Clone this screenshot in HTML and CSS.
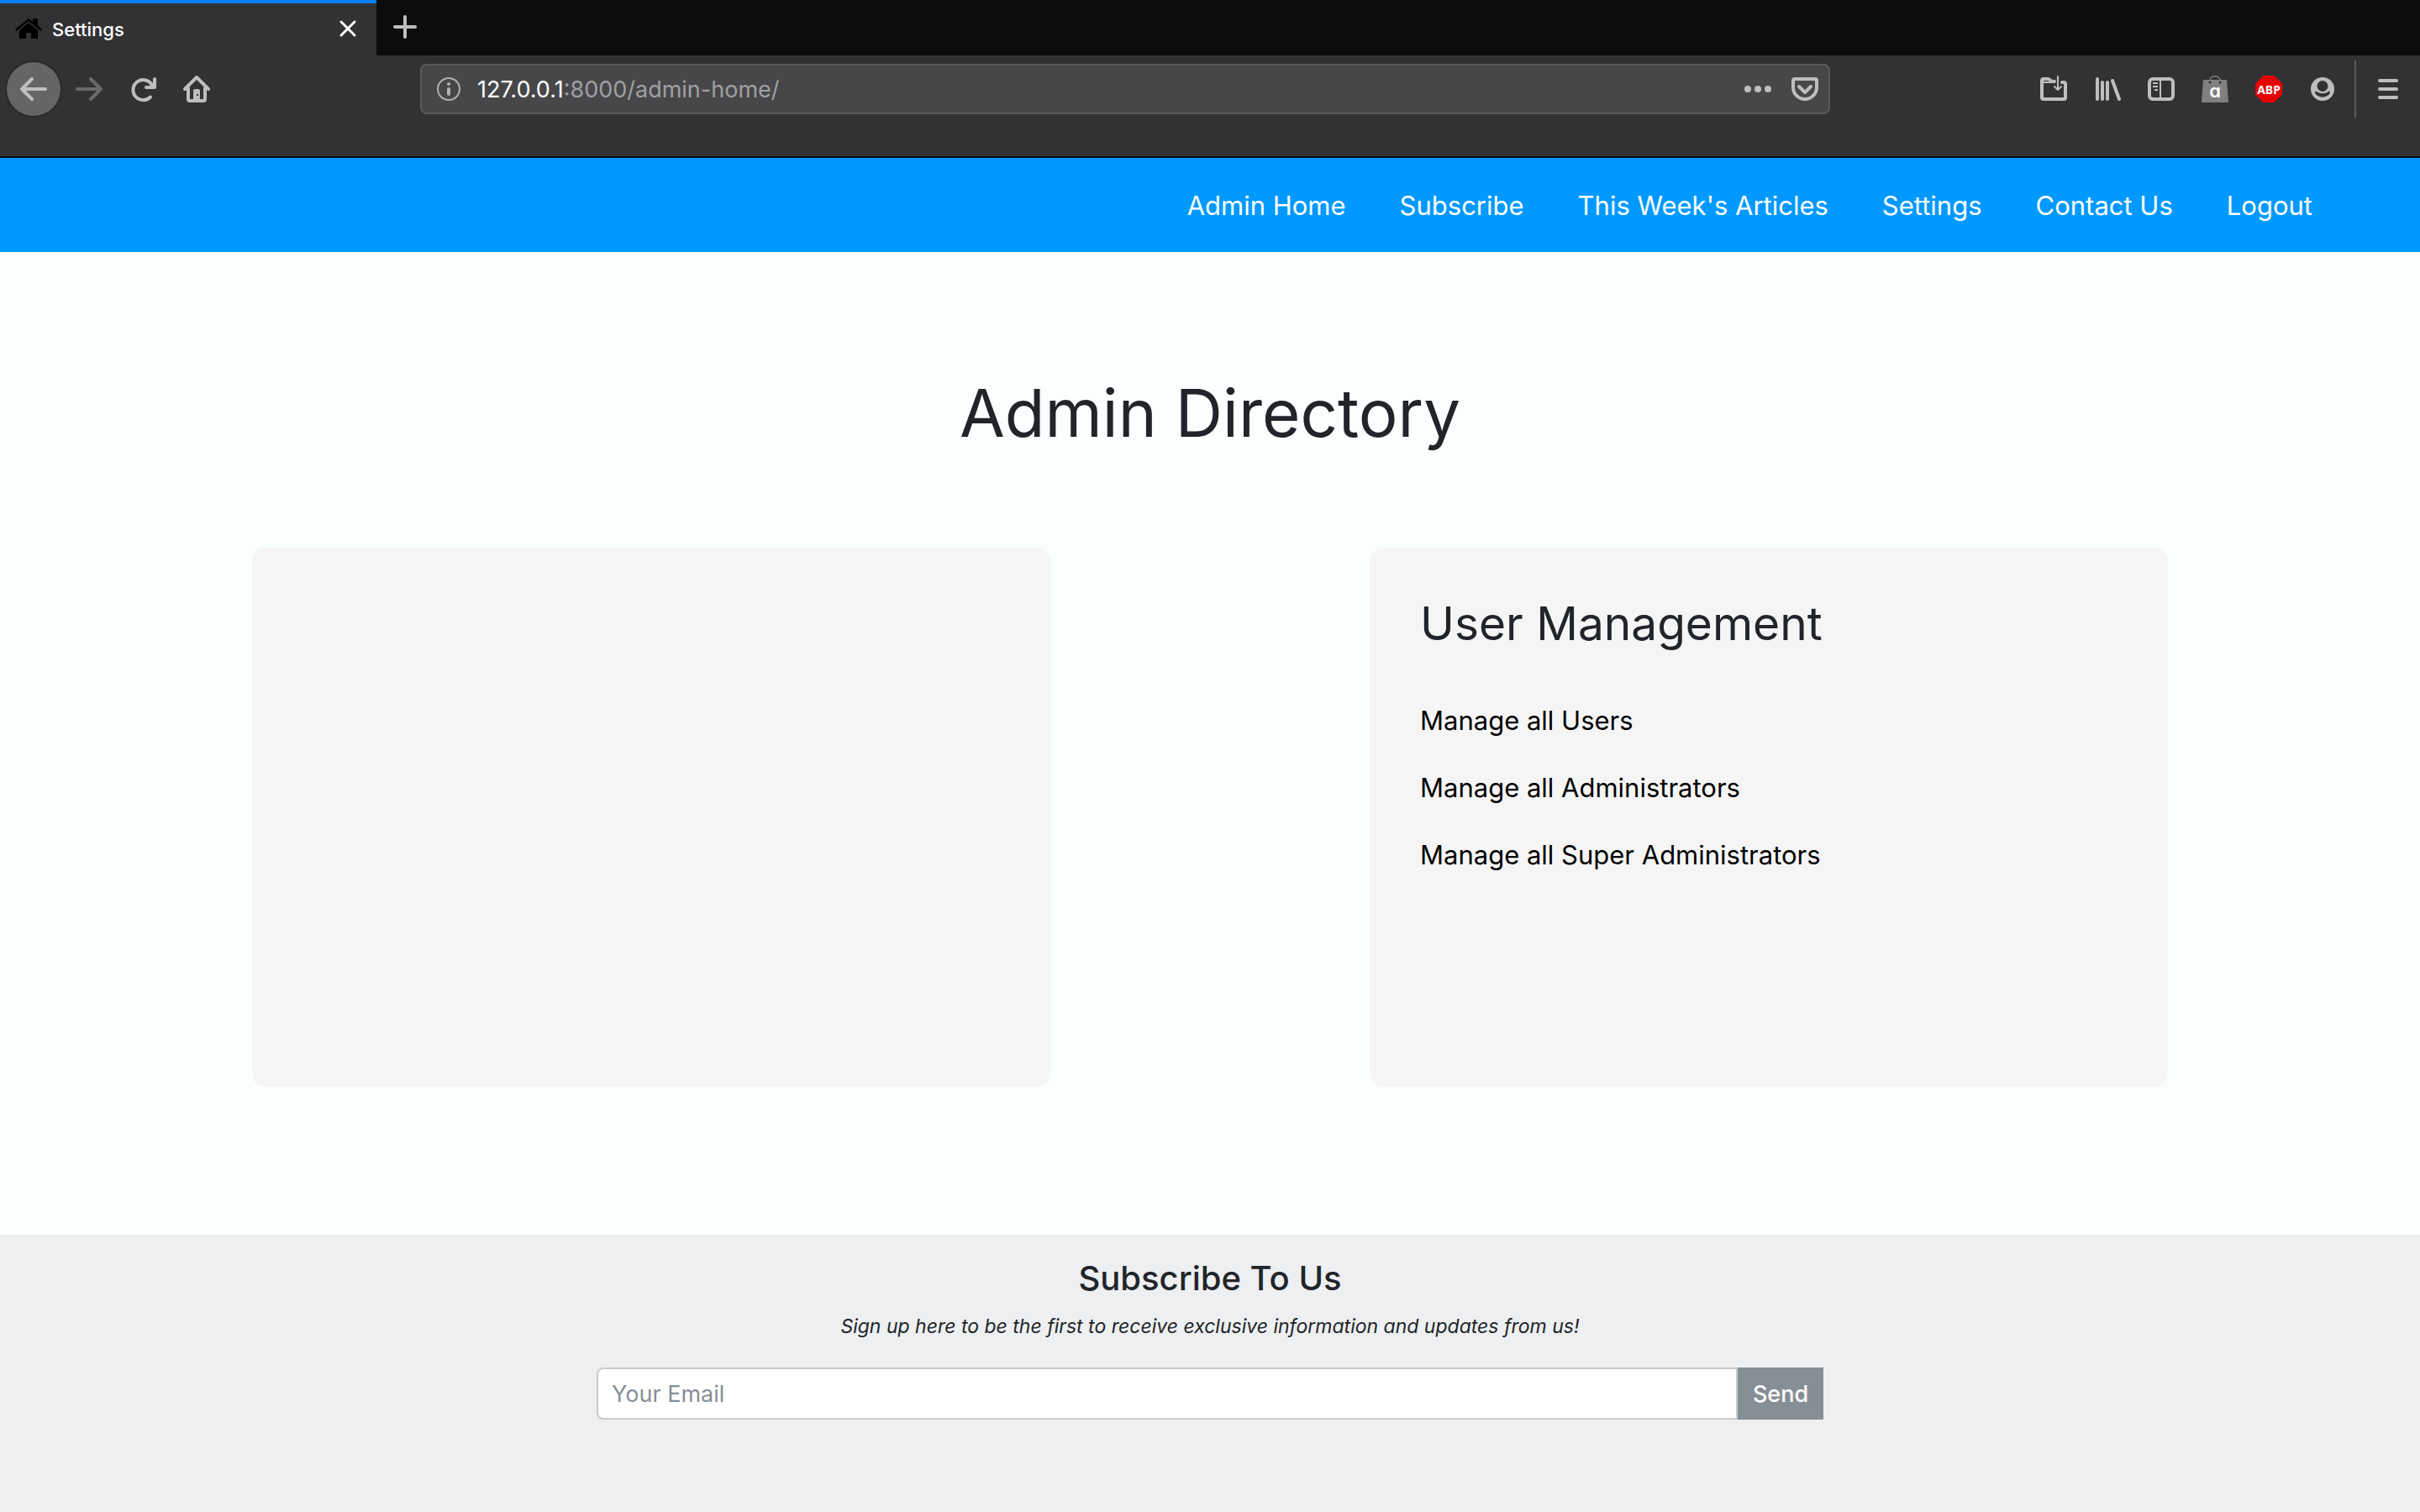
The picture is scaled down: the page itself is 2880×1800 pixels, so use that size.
FILE: index.html
```
<!DOCTYPE html>
<html lang="en">
<head>
<meta charset="utf-8">
<meta name="viewport" content="width=device-width, initial-scale=1">
<title>Settings</title>
<link rel="stylesheet" href="styles.css">
</head>
<body>
<div class="browser">
  <div class="tabs">
    <div class="tab">
      <svg class="icon" viewBox="0 0 32 32" aria-hidden="true"><path fill="#000" d="M0 16 16 3l5 4V3h6v8l5 5-1.500 2L16 6 1.500 18z"/><path fill="#000" d="M5 17 16 8l11 9v10h-8v-7h-6v7H5z"/></svg>
      <span class="tab-title">Settings</span>
      <button class="tab-close" type="button" aria-label="Close tab"><svg class="icon" viewBox="0 0 32 32"><path fill="none" stroke="#fff" stroke-width="3" stroke-linecap="round" d="M8 7l16 16M24 7L8 23"/></svg></button>
    </div>
    <button class="tab-new" type="button" aria-label="New tab"><svg class="icon" viewBox="0 0 32 32"><path class="line" d="M16 3v24M4 15h24"/></svg></button>
  </div>
  <div class="toolbar">
    <div class="tools">
      <button class="tool back" type="button" aria-label="Back"><svg class="icon" viewBox="0 0 32 32"><path class="line" d="M30 16H3M14 4L2 16l12 12"/></svg></button>
      <button class="tool forward" type="button" aria-label="Forward"><svg class="icon" viewBox="0 0 32 32"><path class="line" d="M2 16h27M18 4l12 12-12 12"/></svg></button>
      <button class="tool" type="button" aria-label="Reload"><svg class="icon" viewBox="0 0 32 32"><path class="line" d="M25 25.500A12 12 0 1 1 27 11.500"/><path class="line" d="M30 4v10H20"/></svg></button>
      <button class="tool" type="button" aria-label="Home"><svg class="icon" viewBox="0 0 32 32"><path class="line" d="M2 16L16 2l14 14M6 15v13q0 2 2 2h16q2 0 2-2V15"/><path class="fill" fill-rule="evenodd" d="M12 18q0-2 2-2h4q2 0 2 2v12h-8zM16 22v2h2v-2z"/></svg></button>
    </div>
    <div class="urlbar">
      <svg class="icon" viewBox="0 0 32 32" aria-hidden="true"><circle cx="16" cy="16" r="13" fill="none" stroke="#b1b1b3" stroke-width="2"/><circle cx="16" cy="10" r="2" fill="#b1b1b3"/><path stroke="#b1b1b3" stroke-width="4" stroke-linecap="round" d="M16 16v6"/></svg>
      <span class="url"><span class="host">127.0.0.1</span>:8000/admin-home/</span>
      <button class="url-action" type="button" aria-label="Page actions"><svg class="icon" viewBox="0 0 32 32"><g class="fill"><circle cx="4" cy="16" r="4"/><circle cx="16" cy="16" r="4"/><circle cx="28" cy="16" r="4"/></g></svg></button>
      <button class="url-action" type="button" aria-label="Save to Pocket"><svg class="icon" viewBox="0 0 32 32"><path class="line" d="M4 4h24q2 0 2 2v8a14 14 0 0 1-28 0V6q0-2 2-2zM9 13l7 7 7-7"/></svg></button>
    </div>
    <div class="tools">
      <button class="tool" type="button" aria-label="Open folder"><svg class="icon" viewBox="0 0 32 32"><path class="line" d="M26 8h2q2 0 2 2v16q0 2-2 2H4q-2 0-2-2V6q0-2 2-2h6l4 3h3"/><path fill="none" stroke="#bebebf" stroke-width="2" stroke-linecap="round" stroke-linejoin="round" d="M3 8h14M21 1v16M17 13l4 4 4-4"/></svg></button>
      <button class="tool" type="button" aria-label="Library"><svg class="icon" viewBox="0 0 32 32"><path class="line" d="M4 4v24M10 8v20M16 8v20M22 6l8 22"/></svg></button>
      <button class="tool" type="button" aria-label="Sidebars"><svg class="icon" viewBox="0 0 32 32"><rect class="line" x="2" y="4" width="28" height="24" rx="4"/><path fill="none" stroke="#bebebf" stroke-width="2" d="M15 4v24M6 9h6M6 13h6M8 17h4"/></svg></button>
      <button class="tool" type="button" aria-label="Shopping assistant"><svg class="icon" viewBox="0 0 32 32"><path fill="#808080" d="M2 5h28l2 27H0z"/><path fill="none" stroke="#808080" stroke-width="1.500" d="M10 6C10-1 22-1 22 6"/><circle cx="10" cy="8" r="1.500" fill="#323234"/><circle cx="22" cy="8" r="1.500" fill="#323234"/><text class="bag-letter" x="16" y="26" text-anchor="middle">a</text></svg></button>
      <button class="tool" type="button" aria-label="Adblock Plus"><svg class="icon" viewBox="0 0 32 32"><path fill="#e60000" d="M9.500 0h13L32 9.500v13L22.500 32h-13L0 22.500v-13z"/><text class="abp-text" x="16" y="22" text-anchor="middle">ABP</text></svg></button>
      <button class="tool" type="button" aria-label="Account"><svg class="icon" viewBox="0 0 32 32"><circle class="fill" cx="16" cy="16" r="14"/><circle cx="16" cy="12.500" r="6.500" fill="#323234"/><path fill="#323234" d="M8.500 18.500C12 22 20 22 23.500 18.500 25 18.500 25.500 20 24.500 21.500 21 27 11 27 7.500 21.500 6.500 20 7 18.500 8.500 18.500z"/></svg></button>
      <span class="divider"></span>
      <button class="tool" type="button" aria-label="Menu"><svg class="icon" viewBox="0 0 32 32"><path class="line" d="M6 6h20M6 16h20M6 26h20"/></svg></button>
    </div>
  </div>
</div>
<nav class="site-nav">
  <a href="#">Admin Home</a>
  <a href="#">Subscribe</a>
  <a href="#">This Week's Articles</a>
  <a href="#">Settings</a>
  <a href="#">Contact Us</a>
  <a href="#">Logout</a>
</nav>
<main class="directory">
  <h1>Admin Directory</h1>
  <div class="cards">
    <section class="card"></section>
    <section class="card">
      <h2>User Management</h2>
      <ul class="links">
        <li><a href="#">Manage all Users</a></li>
        <li><a href="#">Manage all Administrators</a></li>
        <li><a href="#">Manage all Super Administrators</a></li>
      </ul>
    </section>
  </div>
</main>
<footer class="subscribe">
  <h3>Subscribe To Us</h3>
  <p>Sign up here to be the first to receive exclusive information and updates from us!</p>
  <form class="subscribe-form">
    <input type="email" placeholder="Your Email" aria-label="Your Email">
    <button type="button">Send</button>
  </form>
</footer>
</body>
</html>
```
FILE: styles.css
```
* {
  box-sizing: border-box;
}

body {
  margin: 0;
  min-height: 100vh;
  display: flex;
  flex-direction: column;
  background: #f9fffd;
  color: #212529;
  font-family: Inter, "Liberation Sans", sans-serif;
  font-size: 31px;
  font-weight: 400;
  line-height: 48px;
}

h1, h2, h3, p, ul {
  margin: 0;
  padding: 0;
}

a {
  color: inherit;
  text-decoration: none;
}

button {
  border: 0;
  padding: 0;
  background: none;
  font: inherit;
  color: inherit;
}

/* Browser window */
.browser {
  background: #323234;
  border-bottom: 2px solid #0c0c0d;
}

.icon {
  display: block;
  flex: none;
  width: 32px;
  height: 32px;
  overflow: visible;
}

.line {
  fill: none;
  stroke: #bebebf;
  stroke-width: 4;
  stroke-linecap: round;
  stroke-linejoin: round;
}

.fill {
  fill: #bebebf;
}

.tabs {
  display: flex;
  height: 66px;
  background: #0c0c0d;
}

.tab {
  display: flex;
  align-items: center;
  gap: 12px;
  width: 448px;
  padding: 0 18px;
  border-top: 4px solid #0080ff;
  background: #323234;
  color: #fff;
  font-size: 22px;
  font-weight: 500;
  line-height: 32px;
}

.tab-title {
  flex: 1;
}

.tab-new {
  padding: 0 18px;
}

.toolbar {
  display: flex;
  align-items: center;
  justify-content: space-between;
  padding: 0 6px 40px 8px;
}

.tools {
  display: flex;
  align-items: center;
  height: 80px;
}

.tool {
  display: flex;
  align-items: center;
  justify-content: center;
  width: 64px;
  height: 64px;
}

.back {
  border-radius: 50%;
  background: #656566;
  box-shadow: 0 0 0 2px #29292b;
  margin-right: 2px;
}

.forward {
  opacity: 0.4;
}

.divider {
  width: 2px;
  height: 68px;
  margin: 0 6px;
  background: #5c5c5e;
}

.urlbar {
  display: flex;
  align-items: center;
  gap: 18px;
  width: 58.55%;
  height: 60px;
  padding: 0 12px 0 16px;
  border: 2px solid #5a5a5c;
  border-radius: 8px;
  background: #474749;
  color: #a0a0a2;
  font-size: 27px;
  line-height: 32px;
}

.url {
  flex: 1;
  padding-top: 2px;
}

.host {
  color: #fff;
}

.url-action + .url-action {
  margin-left: 6px;
}

.bag-letter {
  fill: #fff;
  font: 600 22px Inter, sans-serif;
  font-feature-settings: "cv11";
}

.abp-text {
  fill: #fff;
  font: 700 14px "Noto Sans", sans-serif;
}

/* Site */
.site-nav {
  display: flex;
  justify-content: flex-end;
  gap: 64px;
  padding: 33px 128px 31px;
  background: #0099ff;
  color: #fff;
}

.directory {
  padding: 144px 300px 176px;
}

h1 {
  margin-bottom: 112px;
  font-size: 78px;
  font-weight: 400;
  line-height: 96px;
  text-align: center;
}

.cards {
  display: flex;
  justify-content: space-between;
}

.card {
  width: 41.667%;
  min-height: 642px;
  padding: 56px 60px;
  border-radius: 16px;
  background: #f5f5f5;
}

h2 {
  margin-bottom: 58px;
  font-size: 55px;
  font-weight: 400;
  line-height: 68px;
}

.links {
  display: flex;
  flex-direction: column;
  gap: 32px;
  color: #000;
  list-style: none;
}

.subscribe {
  flex: 1;
  padding: 28px 24px 110px;
  background: #eeeff1;
  text-align: center;
}

h3 {
  margin-bottom: 15px;
  font-size: 40px;
  font-weight: 500;
  line-height: 48px;
}

.subscribe p {
  margin-bottom: 31px;
  font-size: 23px;
  font-style: italic;
  line-height: 36px;
}

.subscribe-form {
  display: flex;
  max-width: 1460px;
  height: 62px;
  margin: 0 auto;
  font-size: 27px;
}

.subscribe-form input {
  flex: 1;
  min-width: 0;
  padding: 2px 16px 0;
  border: 2px solid #c9cacc;
  border-radius: 8px 0 0 8px;
  background: #fff;
  color: #212529;
  font: inherit;
}

.subscribe-form input::placeholder {
  color: #868e96;
  opacity: 1;
}

.subscribe-form button {
  width: 102px;
  padding-top: 2px;
  background: #868e96;
  color: #fff;
  font-weight: 500;
}
```
